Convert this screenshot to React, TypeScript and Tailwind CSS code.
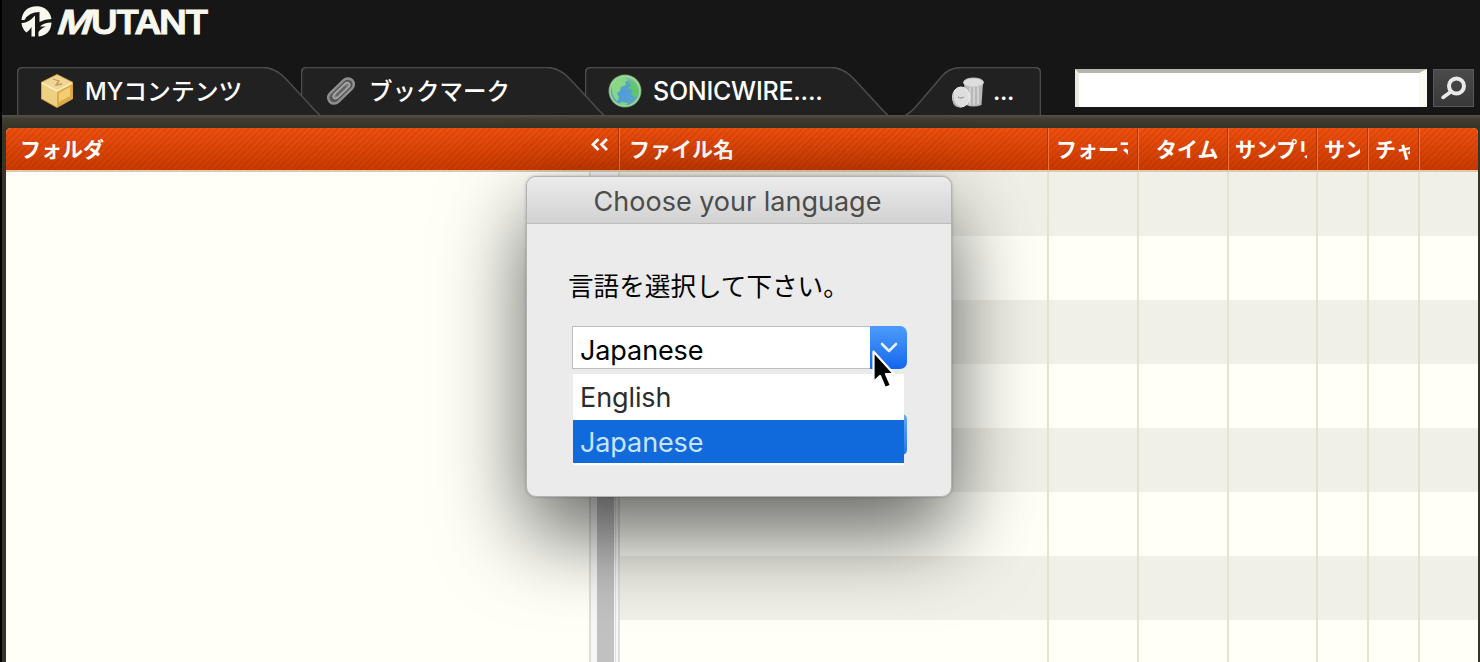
import React, { useState } from 'react';

const TAB_PATH = 'M0.5 48 V6 Q0.5 0.5 6 0.5 H246 Q258 0.5 269 12 L293 38 Q298 44 303 48';
const TRASH_PATH = 'M0.5 48 C6 46 9 42 14 36 L38 8 Q45 0.5 57 0.5 H130 Q135.500 0.5 135.500 6 V48';

const columns = [
  { label: 'ファイル名', cell: 'pl-[9px]' },
  { label: 'フォーマ', cell: 'pl-[7px] pr-[9px]' },
  { label: 'タイム', cell: 'pl-[17px]' },
  { label: 'サンプリ', cell: 'pl-[6px] pr-[9px]' },
  { label: 'サン', cell: 'pl-[6px] pr-[7px]' },
  { label: 'チャ', cell: 'pl-[6px] pr-[8px]' },
  { label: '', cell: '' },
];

const rows = [0, 1, 2, 3, 4, 5, 6, 7];
const GRID = 'grid grid-cols-[429px_90px_90px_89px_51px_51px_58px]';
const STRIPES = 'bg-[repeating-linear-gradient(135deg,rgba(110,30,0,0.12)_0px,rgba(110,30,0,0.12)_1.500px,transparent_2.500px,transparent_4.500px),linear-gradient(#ef500e,#ca3a00)]';

function BoxIcon() {
  return (
    <svg width="36" height="36" viewBox="0 0 36 36">
      <path d="M18 1 L34 9 V26 L18 35 L2 26 V9 Z" fill="#d9a23a" />
      <path d="M18 2 L33 9.500 L18 18 L3 9.500 Z" fill="#eed698" />
      <path d="M3 10 L18 18 V34 L3 25.500 Z" fill="#efd083" />
      <path d="M33 10 L18 18 V34 L33 25.500 Z" fill="#dfab47" />
      <path d="M20 20 L31 14 V23 L20 29 Z" fill="#f2cd74" />
      <path d="M14 6 L20 8 L17 12 L23 11" fill="none" stroke="#c29a50" strokeWidth="1.300" />
      <path d="M3 10 L18 18 L33 10" fill="none" stroke="#fff0bd" strokeWidth="1.500" />
    </svg>
  );
}

function ClipIcon() {
  return (
    <svg width="32" height="32" viewBox="0 0 32 32" fill="none" strokeLinecap="round">
      <g transform="rotate(46 16 16)">
        <rect x="10" y="0.5" width="12" height="31" rx="6" fill="#555" stroke="#8f8f8f" strokeWidth="2.500" />
        <path d="M13.500 10 V22 Q13.500 26 16 26 Q18.500 26 18.500 22 V8 Q18.500 5 16 5 Q13.500 5 13.500 8 Z" fill="#7c7c7c" stroke="#a9a9a9" strokeWidth="1.600" />
        <path d="M16 10 V22" stroke="#5c5c5c" strokeWidth="1.500" />
      </g>
    </svg>
  );
}

function GlobeIcon() {
  return (
    <svg width="34" height="34" viewBox="0 0 34 34">
      <defs>
        <radialGradient id="globe" cx="0.45" cy="0.6" r="0.6">
          <stop offset="0" stopColor="#4f9be0" />
          <stop offset="0.65" stopColor="#5aa5bf" />
          <stop offset="1" stopColor="#8cc98d" />
        </radialGradient>
      </defs>
      <circle cx="17" cy="17" r="16.500" fill="#659e62" />
      <circle cx="17" cy="17" r="15" fill="url(#globe)" />
      <path d="M4 11 Q8 3 17 3 L20 6 L17 8 L18 11 L13 13 L12 17 L9 19 L11 24 L9 27 Q3 22 4 11 Z" fill="#86d884" />
      <path d="M22 6 Q30 10 31 18 Q29 23 26 23 L23 19 L25 16 L20 14 L23 11 Z" fill="#5fc968" />
      <path d="M11 30 L14 28 L20 29 L17 32 Z" fill="#84d37f" />
      <circle cx="17" cy="17" r="15" fill="none" stroke="#b5e8ab" strokeWidth="1.500" opacity="0.7" />
    </svg>
  );
}

function TrashIcon() {
  return (
    <svg width="34" height="32" viewBox="0 0 34 32">
      <path d="M13 6 H32 L30.500 28 Q22 31 15 28 Z" fill="#b8b8b8" />
      <path d="M19 9 V28 M23 9 V28 M27 9 V27" stroke="#d4d4d4" strokeWidth="1.800" />
      <ellipse cx="22.500" cy="5.500" rx="10" ry="4.500" fill="#dedede" stroke="#c4c4c4" />
      <ellipse cx="10" cy="20" rx="8.500" ry="10" fill="#dedede" stroke="#f0f0f0" />
      <path d="M3 15 Q1 27 11 30.500 Q5 31 2.500 27 Q0 20 3 15 Z" fill="#b8b8b8" />
      <path d="M7 20 Q10 22 13 20" fill="none" stroke="#999" strokeWidth="1.500" />
    </svg>
  );
}

function Logo() {
  return (
    <div className="flex items-center text-[#f8f8ef]">
      <svg width="31" height="31" viewBox="0 0 31 31" fill="currentColor">
        <path d="M0.500 14 Q2 0.500 16 0.300 Q28 1 30.500 13 Q24 13 18.500 16 V6 Q8 6 3.500 14 Z" />
        <path d="M0.500 17 Q7 17.500 14 9.500 V30.500 H10.500 V21 Q8.500 24.500 5.500 26.500 Q1 23 0.500 17 Z" />
        <path d="M30.500 16.500 Q30 29 17.500 30.500 V26 Q20 22 25 20.500 H19 Q23 16.500 30.500 16.500 Z" />
      </svg>
      <span className="ml-[7px] flex origin-left scale-x-[1.115] items-baseline text-[33px] font-semibold leading-[28px] tracking-[-2px] [-webkit-text-stroke:0.900px_#f8f8ef]">
        <span className="inline-block -skew-x-[16deg]">M</span>
        <span>UTANT</span>
      </span>
    </div>
  );
}

function Tab({ icon, label, className, labelClass }: { icon: React.ReactNode; label: string; className: string; labelClass: string }) {
  return (
    <button className={`relative flex h-12 w-[303px] shrink-0 items-center text-white ${className}`}>
      <svg className="absolute inset-0" width="303" height="48" fill="#212121" stroke="#4b4b4b" strokeWidth="1.600">
        <path d={TAB_PATH} />
      </svg>
      <span className="relative flex w-9 shrink-0 justify-center">{icon}</span>
      <span className={`relative whitespace-nowrap pt-[2px] ${labelClass}`}>{label}</span>
    </button>
  );
}

function LanguageDialog() {
  const [language, setLanguage] = useState('Japanese');

  return (
    <div className="absolute left-[526px] top-[176px] z-40 flex h-[321px] w-[426px] flex-col rounded-[10px] border border-[#b2b2b2] bg-[#ebebeb] shadow-[0_36px_84px_rgba(0,0,0,0.62),0_0_3px_rgba(0,0,0,0.25)]">
      <div className="flex h-[47px] shrink-0 items-center justify-center rounded-t-[9px] border-b border-[#bcbcbc] bg-linear-to-b from-[#ececec] to-[#d2d2d2] pt-[4px] pr-[3px] text-[27px] text-[#4c4c4c]">
        Choose your language
      </div>
      <div className="flex flex-col pl-[41px] pt-[41px]">
        <p className="h-[44px] text-[25.600px] leading-[44px] text-black">言語を選択して下さい。</p>
        <div className="relative mt-[17px] ml-[4px] flex h-[43px] w-[335px]">
          <div className="flex flex-1 items-center border border-r-0 border-[#bdbdbd] bg-white pl-[7px] pt-[7px] text-[27px] tracking-[-0.100px] text-black">
            {language}
          </div>
          <button className="flex w-[37px] items-center justify-center rounded-r-[7px] bg-linear-to-b from-[#4d9bfb] to-[#1266ed]">
            <svg width="18" height="12" viewBox="0 0 18 12" fill="none" stroke="#e6f3ff" strokeWidth="2.600" strokeLinecap="round" strokeLinejoin="round">
              <path d="M2 2 L9 9 L16 2" />
            </svg>
          </button>
          {/* default button sitting behind the open list */}
          <div className="absolute left-[300px] top-[88px] h-[41px] w-[35px] rounded-[5px] bg-linear-to-b from-[#64a8f8] to-[#1d78ee]" />
          <div className="absolute left-[1px] top-[48px] flex w-[331px] flex-col bg-white pb-[2px] text-[27px] tracking-[-0.100px]">
            {['English', 'Japanese'].map((item) => (
              <button
                key={item}
                onClick={() => setLanguage(item)}
                className={`pl-[7px] text-left ${item === language ? 'h-[43px] bg-[#116adb] pt-[3px] text-[#c9e4fd]' : 'h-[46px] pt-[2px] text-[#2c2c2c]'}`}
              >
                {item}
              </button>
            ))}
          </div>
          <svg className="absolute left-[299px] top-[23px]" width="26" height="42" viewBox="0 0 26 42">
            <path d="M2.500 2.500 V33 L9 27 L14 39 L20 36.500 L15 25 H23 Z" fill="#000" stroke="#fff" strokeWidth="2.200" strokeLinejoin="round" />
          </svg>
        </div>
      </div>
    </div>
  );
}

export default function App() {
  return (
    <div className="relative flex h-[662px] w-[1480px] flex-col overflow-hidden bg-[#161616] font-['Inter','Noto_Sans_CJK_JP',sans-serif]">
      <header className="flex h-[115px] shrink-0 flex-col border-l-2 border-black">
        <div className="h-[67px] pl-[19px] pt-[6px]">
          <Logo />
        </div>
        <div className="flex h-12">
          <Tab className="z-30 ml-[15px] pl-[22px]" icon={<BoxIcon />} label="MYコンテンツ" labelClass="ml-[10px] text-[23.800px] font-medium" />
          <Tab className="z-20 -ml-[19px] pl-[22px]" icon={<ClipIcon />} label="ブックマーク" labelClass="ml-[10px] text-[23.500px] font-medium" />
          <Tab className="z-10 -ml-[19px] pl-[22px]" icon={<GlobeIcon />} label="SONICWIRE...." labelClass="ml-[10px] text-[25px] font-medium tracking-[-0.250px]" />
          <button className="relative ml-[17px] flex h-12 w-[136px] items-center pl-[46px] text-white">
            <svg className="absolute inset-0" width="136" height="48" fill="#212121" stroke="#4b4b4b" strokeWidth="1.600">
              <path d={TRASH_PATH} />
            </svg>
            <span className="relative mt-[4px]"><TrashIcon /></span>
            <span className="relative ml-[8px] pt-[2px] text-[23px] font-semibold tracking-[-0.300px]">...</span>
          </button>
          <div className="ml-[34px] mt-[2px] h-[38px] w-[352px] border-l-4 border-t-4 border-r-8 border-l-[#e9eae2] border-t-[#b4b5ac] border-r-[#f8f9ef] bg-white" />
          <button className="ml-[6px] mt-[2px] flex h-[38px] w-[41px] items-center justify-center border border-[#595959] bg-linear-to-b from-[#4b4b4b] to-[#393939]">
            <svg width="28" height="26" viewBox="0 0 28 26" fill="none" stroke="#e9e9e9" strokeLinecap="round">
              <circle cx="16.500" cy="11" r="7.500" strokeWidth="4" />
              <path d="M10.500 17 L3 22.500" strokeWidth="3.500" />
            </svg>
          </button>
        </div>
      </header>

      <main className="flex min-h-0 flex-1 flex-col border-l-2 border-black bg-[#363628]">
        <div className="h-[13px] shrink-0 bg-linear-to-b from-[#57514a] via-[#403d31] via-30% to-[#353527]" />
        <div className="ml-1 mr-[2px] flex min-h-0 flex-1 flex-col overflow-hidden rounded-t-[5px] bg-[#fffff8]">
          <div className={`flex h-[42px] shrink-0 text-[21px] font-bold text-white ${STRIPES}`}>
            <div className="flex w-[613px] shrink-0 items-center justify-between border-r border-[#b53604] pl-[14px] pr-[9px] pt-[2px]">
              <span>フォルダ</span>
              <svg className="-mt-[12px]" width="20" height="13" viewBox="0 0 20 13" fill="none" stroke="#fff" strokeWidth="2.800">
                <path d="M9.500 1 L4 6.500 L9.500 12 M18 1 L12.500 6.500 L18 12" />
              </svg>
            </div>
            <div className={GRID}>
              {columns.map((col, i) => (
                <div key={i} className={`flex min-w-0 items-center border-l border-l-[#f0703a] pt-[2px] ${i < 6 ? 'border-r border-r-[#b53604]' : ''} ${col.cell}`}>
                  <span className="w-full overflow-hidden whitespace-nowrap">{col.label}</span>
                </div>
              ))}
            </div>
          </div>
          <div className="flex min-h-0 flex-1 border-t-2 border-[#e0c9ab]">
            <div className="w-[583px] shrink-0 bg-[#fffff8]" />
            <div className="flex w-[31px] shrink-0 border-x-2 border-[#dededb] bg-[#f6f6f6] pl-[6px] pt-[10px]">
              <div className="w-[17px] bg-[#c1c1c1]" />
              <div className="ml-[1px] w-[1px] bg-[#e0e0e0]" />
            </div>
            <div className="flex-1">
              {rows.map((row) => (
                <div key={row} className={`h-16 ${GRID} ${row % 2 === 0 ? 'bg-[#f0f0e8]' : 'bg-[#fffff8]'}`}>
                  {columns.map((col, i) => (
                    <div key={i} className={i < 6 ? 'border-r-2 border-[#e5e3cf]' : ''} />
                  ))}
                </div>
              ))}
            </div>
          </div>
        </div>
      </main>

      <LanguageDialog />
    </div>
  );
}
